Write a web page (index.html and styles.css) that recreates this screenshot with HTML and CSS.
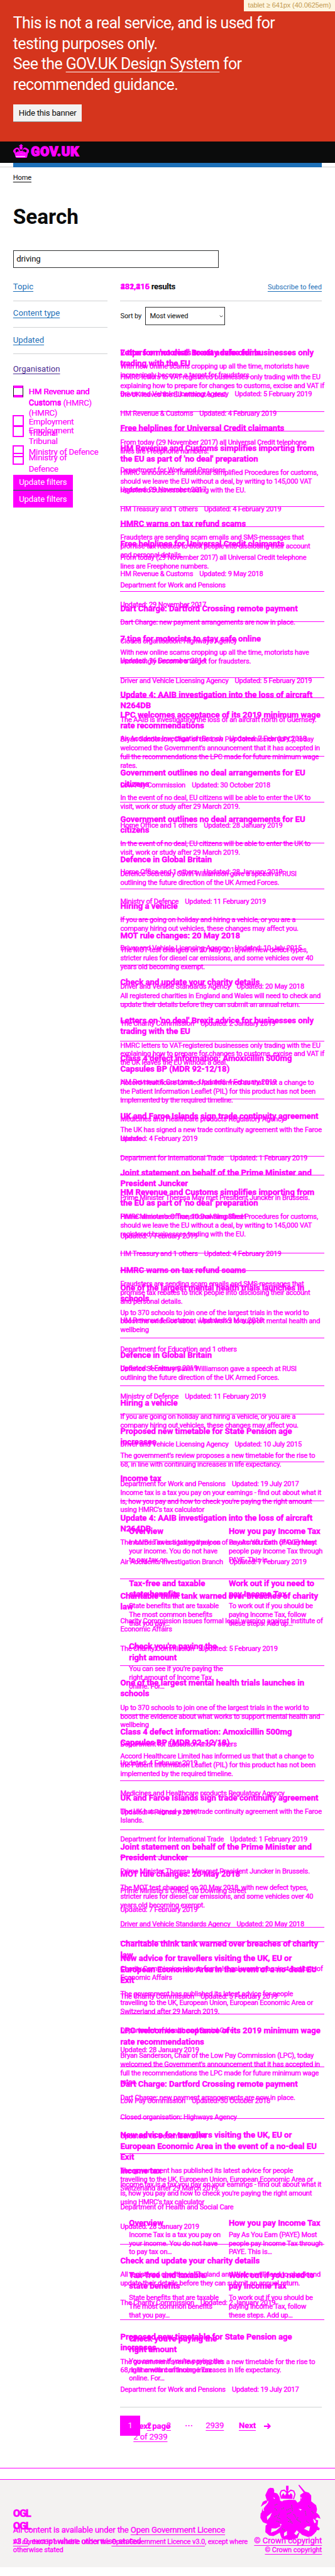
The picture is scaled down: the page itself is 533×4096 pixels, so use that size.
FILE: index.html
```html
<!DOCTYPE html>
<html lang="en">
<head>
<meta charset="utf-8">
<title>Search - GOV.UK</title>
<link rel="stylesheet" href="styles.css">
</head>
<body>
<div class="breakpoint">tablet ≥ 641px (40.0625em)</div>
<section class="banner">
  <p>This is not a real service, and is used for<br>testing purposes only.<br>See the <a>GOV.UK Design System</a> for<br>recommended guidance.</p>
  <button class="hide-btn">Hide this banner</button>
</section>
<header class="header">
  <svg class="crown" viewBox="0 0 108 94"><g fill="#f0f"><path d="M50 0h9v7h7v8h-7l6 8-4 14H47l-5-14 7-8h-8V7h9z"/><path d="M18 92 8 62 0 52v-9l8-11 14-8h12l8 9 5 12h15l5-12 8-9h12l14 8 10 12-2 10-8 10-6 28-10 2H28z"/></g><path d="M16 40l8-6 10 3 6 12-12 2-10 8zm48 7 8-12 14 2 8 8-6 12-12-5z" fill="#0b0c0c"/><path d="M17 82h66v5H17z" fill="#fff"/><path d="M24 62h3m10 6h3m12-3h4m10 2h3m10-4h3" stroke="#fff" stroke-width="3"/></svg>
  <span class="logotype">GOV.UK</span>
</header>
<div class="bluewrap"><div class="bluebar"></div></div>
<main class="main">
  <a class="home">Home</a>
  <h1>Search</h1>
  <div class="search">driving</div>
  <div class="columns">
    <aside>
      <div class="facet"><a>Topic</a></div>
      <div class="facet"><a>Content type</a></div>
      <div class="facet"><a>Updated</a></div>
      <div class="facet open"><a>Organisation</a></div>
      <div class="stack">
        <div class="checks first">
          <div class="check"><i class="box dark"></i><span>HM Revenue and<br>Customs (HMRC)</span></div>
          <div class="check"><i class="box"></i><span>Employment<br>Tribunal</span></div>
          <div class="check"><i class="box"></i><span>Ministry of Defence</span></div>
          <button class="update">Update filters</button>
        </div>
        <div class="checks second">
          <div class="check tall"><i class="box dark"></i><span>HM Revenue and<br>Customs<br>(HMRC)</span></div>
          <div class="check"><i class="box"></i><span>Employment<br>Tribunal</span></div>
          <div class="check"><i class="box"></i><span>Ministry of<br>Defence</span></div>
          <button class="update">Update filters</button>
        </div>
      </div>
    </aside>
    <section class="content">
      <div class="count">
        <h2><span class="stack num"><span>432,215</span><span>281,416</span></span><span>results</span></h2>
        <a>Subscribe to feed</a>
      </div>
      <div class="sort"><span>Sort by</span><div class="select">Most viewed<svg viewBox="0 0 10 6"><path d="M1 1l4 4 4-4" fill="none" stroke="#333" stroke-width="1.5"/></svg></div></div>
      <div class="stack lists">
        <ul class="results" id="list-a"></ul>
        <ul class="results" id="list-b"></ul>
      </div>
      <div class="stack pager">
        <div class="pages"><b class="cur">1</b><a>2</a><a>3</a><span class="dots">⋯</span><a class="last">2939</a><a class="next">Next</a><svg viewBox="0 0 16 14"><path d="M0 7h14M8 1l6 6-6 6" fill="none" stroke="#f0f" stroke-width="3"/></svg></div>
        <div class="nextpage"><b>Next page</b><a>2 of 2939</a></div>
      </div>
    </section>
  </div>
</main>
<div class="rule"></div>
<footer class="footer">
  <div class="stack">
    <div class="foot one">
      <div><b class="ogl">OGL</b><p>All content is available under the <a>Open Government Licence</a><br><a>v3.0</a>, except where otherwise stated</p></div>
      <div class="crown-copy">
        <svg class="crest" viewBox="50 45 415 390"><g fill="#f0f">
          <path d="M228 51h17v30h-3v40h-12V81h-2z"/>
          <path d="M105 73l14-8 22 3 6 16-2 14 22 6 16 24 4 26 14 6 10-8 40-4 42 2 14 18 18-12 2-16-2-26 24-16-34-46-1-9 7 4 38 44 26 8 16 20 0 40 34 26 6 28-8 40-20 22 8 30 32 34-30 42-20 18-24 5-40-14-18-16-14 38-56 14-52-12-10-24-4-16-24 14-20 10-28-4-28-24 2-44 12-12-30-12-18-30 2-30 30-30 10-20 4-36-12-40z"/>
          <path d="M54 196l14-34 20-10 16 4 2 20-14 24-6 20 10 26-20 0-16-12 4-22 18-24 10-16-16 8z"/>
          <path d="M412 244l28-5 16 16 9 24-24-10-12 14 20 6-4 36-16 4-10-14 16-14-8-14-14-10z"/>
          <path d="M388 338l16 8 34-8 22 4-4 16-18-2-4 14-28-4z"/></g>
          <path d="M196 140l-9-34 8-20 20-4 16 14 12 0 18-14 20 6 8 22-10 34" fill="none" stroke="#f0f" stroke-width="8"/>
          <path d="M198 140v-24l12-14 10 18 8-14 10-4 12 14 10-14 12 12v28z" fill="#f0f"/>
          <path d="M128 344l30 2 38-18-36 32-36 14zM214 376l20-14 0 28-20 10zM302 358l14 14-18 20-14-12zM372 330l22 2-8 32-34-16zM96 264l34-28-12 30-20 22zM186 314l12 2-8 12z" fill="#f3f2f1"/>
          <path d="M76 222q-16-6 8-34t18-32" fill="none" stroke="#f3f2f1" stroke-width="7"/>
          <path d="M138 132l14 4-4 6zM322 132l14 0-2 8zM314 210l22 4-8 8z" fill="#fff"/>
          <path d="M150 185l20-8m-20 30 16 14m2 50 24 10m-30 14 26 8m8-90 20-12m14 18 30-12m-26 40 34-14m-34 34 22 18m10-102 6 44m8 20 16 22m-42 16 20 30m30-30 26 18m30-78 6 34m14-70 16 14m-28 90 14 12m22-80 14 18m-270 24 14-10m40 90 20 14m20-64 20 6m36-20 16-16m-140-6 10-24" stroke="#6f7d75" stroke-width="5" stroke-dasharray="7 5" fill="none"/>
        </svg>
        <a>© Crown copyright</a>
      </div>
    </div>
    <div class="foot two">
      <div><b class="ogl">OGL</b><p>All content is available under the <a>Open Government Licence v3.0</a>, except where<br>otherwise stated</p></div>
      <div class="crown-copy"><a>© Crown copyright</a></div>
    </div>
  </div>
</footer>
<script src="results.js"></script>
</body>
</html>
```
FILE: results.js
```js
// title, description, meta rows; "|" marks a line break, "~" separates inline meta items
const items = {
  tips: ["7 tips for motorists to stay safe online", "With new online scams cropping up all the time, motorists have|increasingly become a target for fraudsters.", ["Driver and Vehicle Licensing Agency~Updated: 5 February 2019"]],
  letters: ["Letters on 'no deal' Brexit advice for businesses only|trading with the EU", "HMRC letters to VAT-registered businesses only trading with the EU|explaining how to prepare for changes to customs, excise and VAT if|the UK leaves the EU without a deal.", ["HM Revenue & Customs~Updated: 4 February 2019"]],
  free: ["Free helplines for Universal Credit claimants", "From today (29 November 2017) all Universal Credit telephone|lines are Freephone numbers.", ["Department for Work and Pensions", "Updated: 29 November 2017"]],
  simplifies: ["HM Revenue and Customs simplifies importing from|the EU as part of 'no deal' preparation", "HMRC announces Transitional Simplified Procedures for customs,|should we leave the EU without a deal, by writing to 145,000 VAT|registered businesses trading with the EU.", ["HM Treasury and 1 others~Updated: 4 February 2019"]],
  warns: ["HMRC warns on tax refund scams", "Fraudsters are sending scam emails and SMS-messages that|promise tax rebates to trick people into disclosing their account|and personal details.", ["HM Revenue & Customs~Updated: 9 May 2018"]],
  dart: ["Dart Charge: Dartford Crossing remote payment", "Dart Charge: new payment arrangements are now in place.", ["Closed organisation: Highways Agency", "Updated: 16 December 2014"]],
  aaib: ["Update 4: AAIB investigation into the loss of aircraft|N264DB", "The AAIB is investigating the loss of an aircraft north of Guernsey.", ["Air Accidents Investigation Branch~Updated: 7 February 2019"]],
  lpc: ["LPC welcomes acceptance of its 2019 minimum wage|rate recommendations", "Bryan Sanderson, Chair of the Low Pay Commission (LPC), today|welcomed the Government's announcement that it has accepted in|full the recommendations the LPC made for future minimum wage|rates.", ["Low Pay Commission~Updated: 30 October 2018"]],
  citizens: ["Government outlines no deal arrangements for EU|citizens", "In the event of no deal, EU citizens will be able to enter the UK to|visit, work or study after 29 March 2019.", ["Home Office and 1 others~Updated: 28 January 2019"]],
  defence: ["Defence in Global Britain", "Defence Secretary Gavin Williamson gave a speech at RUSI|outlining the future direction of the UK Armed Forces.", ["Ministry of Defence~Updated: 11 February 2019"]],
  hiring: ["Hiring a vehicle", "If you are going on holiday and hiring a vehicle, or you are a|company hiring out vehicles, these changes may affect you.", ["Driver and Vehicle Licensing Agency~Updated: 10 July 2015"]],
  mot: ["MOT rule changes: 20 May 2018", "The MOT test changed on 20 May 2018, with new defect types,|stricter rules for diesel car emissions, and some vehicles over 40|years old becoming exempt.", ["Driver and Vehicle Standards Agency~Updated: 20 May 2018"]],
  check: ["Check and update your charity details", "All registered charities in England and Wales will need to check and|update their details before they can submit an annual return.", ["The Charity Commission~Updated: 2 January 2019"]],
  amox: ["Class 4 defect information: Amoxicillin 500mg|Capsules BP (MDR 92-12/18)", "Accord Healthcare Limited has informed us that that a change to|the Patient Information Leaflet (PIL) for this product has not been|implemented by the required timeline.", ["Medicines and Healthcare products Regulatory Agency", "Updated: 4 February 2019"]],
  faroe: ["UK and Faroe Islands sign trade continuity agreement", "The UK has signed a new trade continuity agreement with the Faroe|Islands.", ["Department for International Trade~Updated: 1 February 2019"]],
  joint: ["Joint statement on behalf of the Prime Minister and|President Juncker", "Prime Minister Theresa May met President Juncker in Brussels.", ["Prime Minister's Office, 10 Downing Street", "Updated: 7 February 2019"]],
  mental: ["One of the largest mental health trials launches in|schools", "Up to 370 schools to join one of the largest trials in the world to|boost the evidence about what works to support mental health and|wellbeing", ["Department for Education and 1 others", "Updated: 4 February 2019"]],
  pension: ["Proposed new timetable for State Pension age|increases", "The government’s review proposes a new timetable for the rise to|68, in line with continuing increases in life expectancy.", ["Department for Work and Pensions~Updated: 19 July 2017"]],
  income: ["Income tax", "Income tax is a tax you pay on your earnings - find out about what it|is, how you pay and how to check you're paying the right amount|using HMRC's tax calculator", [], [
    ["Overview", "Income Tax is a tax you pay on|your income. You do not have|to pay tax on…"],
    ["How you pay Income Tax", "Pay As You Earn (PAYE) Most|people pay Income Tax through|PAYE. This is…"],
    ["Tax-free and taxable|state benefits", "State benefits that are taxable|The most common benefits|that you pay…"],
    ["Work out if you need to|pay Income Tax", "To work out if you should be|paying Income Tax, follow|these steps. Add up…"],
    ["Check you're paying the|right amount", "You can see if you’re paying the|right amount of Income Tax|online. For…"]]],
  think: ["Charitable think tank warned over breaches of charity|law", "Charity Commission issues formal legal warning against Institute of|Economic Affairs", ["The Charity Commission~Updated: 5 February 2019"]],
  travel: ["New advice for travellers visiting the UK, EU or|European Economic Area in the event of a no-deal EU|Exit", "The government has published its latest advice for people|travelling to the UK, European Union, European Economic Area or|Switzerland after 29 March 2019.", ["Department of Health and Social Care", "Updated: 28 January 2019"]]
};
const orders = {
  a: "tips free warns dart aaib citizens defence mot letters faroe simplifies mental hiring income amox joint think lpc travel check pension",
  b: "letters simplifies free tips lpc citizens hiring check amox joint warns defence pension aaib think mental faroe mot travel dart income"
};
const br = s => s.replace(/&/g, "&amp;").replace(/\|/g, "<br>");
const sub = list => list ? `<div class="parts">${list.map(p => `<div><h4>${br(p[0])}</h4><p>${br(p[1])}</p></div>`).join("")}</div>` : "";
const row = ([t, d, m, parts]) => `<li><h3>${br(t)}</h3><p>${br(d)}</p>${
  m.map(r => `<div class="meta">${r.split("~").map(x => `<span>${br(x)}</span>`).join("")}</div>`).join("")}${sub(parts)}</li>`;
for (const k in orders) document.getElementById("list-" + k).innerHTML = orders[k].split(" ").map(n => row(items[n])).join("");
```
FILE: styles.css
```css
html { font-size: 6.938px; background: #fff; }
* { box-sizing: border-box; }
body { margin: 0; font-family: Roboto, "Liberation Sans", sans-serif; font-size: 1.6rem; line-height: 2rem; letter-spacing: -.024rem; color: #0b0c0c; overflow-x: hidden; position: relative; white-space: nowrap; }
h1, h2, h3, h4, p, ul { margin: 0; padding: 0; font-size: inherit; list-style: none; }
h1, h2, h3, h4 { letter-spacing: -.004rem; }
button { font: inherit; letter-spacing: inherit; border: 0; padding: 0; display: block; }
a { text-decoration: underline; text-underline-offset: .25em; text-decoration-thickness: 1px; text-decoration-skip-ink: none; }
.stack { display: grid; }
.stack > * { grid-area: 1 / 1; }
.breakpoint { position: absolute; top: 0; right: 0; width: 20.9rem; height: 2.6rem; background: #fff6e0; color: #c39a50; font: 1.6rem/2.5rem "Liberation Sans", sans-serif; text-align: center; letter-spacing: -.02rem; }
.banner { height: 32.4rem; background: #d5351d; color: #fff; padding: 3rem; }
.banner p { font-size: 3.6rem; line-height: 4.72rem; letter-spacing: -.09rem; }
.banner a { text-underline-offset: .16em; }
.hide-btn { width: 15.8rem; height: 4.05rem; margin-top: 2rem; background: #f3f2f1; color: #0b0c0c; font-size: 1.9rem; line-height: 4.1rem; border-bottom: 1px solid #929191; letter-spacing: -.036rem; }
.header { height: 4.9rem; background: #0b0c0c; padding: .6rem 3rem 0; display: flex; gap: .5rem; }
.crown { width: 3.6rem; height: 3.2rem; }
.logotype { font-size: 3rem; font-weight: 900; line-height: 3.6rem; letter-spacing: .08rem; color: #f0f; -webkit-text-stroke: 1.4px #f0f; }
.bluewrap { height: 1.05rem; padding: 0 3rem; border-bottom: 1px solid #ccc; }
.bluebar { height: 1.05rem; background: #1d70b8; }
.main { padding: 1.5rem 3rem 0; height: 527.3rem; }
.home { display: block; width: max-content; }
h1 { margin-top: 5.5rem; font-size: 4.8rem; line-height: 5rem; }
.search { margin-top: 5rem; width: 47.2rem; height: 4.06rem; border: 1px solid #0b0c0c; outline: 1px solid #77777755; outline-offset: -1px; padding-left: .65rem; font-size: 1.9rem; line-height: 3.8rem; }
.columns { display: grid; grid-template-columns: 21.6rem 46.2rem; gap: 3rem; padding-top: 1.5rem; }
.facet { height: 6.1rem; padding-top: 1.55rem; border-bottom: 1px solid #d0d2d3; font-size: 1.9rem; line-height: 2.5rem; letter-spacing: 0; color: #1d70b8; }
.facet.open { border: 0; padding-top: 2.1rem; height: 7.2rem; color: #4c2c92; }
.checks { color: #f0f; font-size: 1.9rem; line-height: 2.5rem; -webkit-text-stroke: .2px #f0f; }
.check { display: grid; grid-template-columns: 2.4rem auto; gap: 1.2rem; height: 6.9rem; }
.check span { padding-top: .15rem; }
.box { height: 2.4rem; border: 1px solid #f0f; outline: .5px solid #f0f; }
.box.dark { border-color: #f0f #0b0c0c; outline: 0; border-top-width: 2px; border-bottom-width: 2px; }
.second { padding-top: .3rem; }
.second .check { height: 6.3rem; }
.second .tall { height: 8.95rem; }
.second .check span { padding-top: 0; margin-top: -.25rem; }
.update { width: 13.7rem; height: 3.65rem; background: #f0f; color: #fff; -webkit-text-stroke: 0; font-size: 1.9rem; border-bottom: 1px solid #00703c; margin-top: -.3rem; }
.second .update { margin-top: 2.2rem; border: 0; height: 3.85rem; }
.count { height: 6.1rem; border-bottom: 1px solid #d0d2d3; padding-top: 1.55rem; display: flex; justify-content: space-between; }
.count h2 { display: flex; gap: .4rem; font-size: 1.9rem; line-height: 2.5rem; letter-spacing: -.05rem; }
.count a { color: #1d70b8; line-height: 2.9rem; letter-spacing: 0; }
.num { color: #f0f; width: 6.7rem; }
.sort { display: flex; align-items: center; gap: .8rem; margin-top: 1.4rem; height: 4.05rem; }
.select { width: 18.4rem; height: 4.05rem; border: 1px solid #0b0c0c; outline: 1px solid #77777755; outline-offset: -1px; display: flex; align-items: center; justify-content: space-between; padding: 0 .3rem 0 1rem; }
.select svg { width: .9rem; }
.lists { margin-top: 2.5rem; color: #f0f; border-bottom: 1px solid #d0d2d3; -webkit-text-stroke: .4px #f0f; }
.results li { padding: 2.55rem 0 2.836rem; border-bottom: 1px solid #f0f; }
.results li:last-child { border: 0; }
.results h3, .results h4 { font-size: 1.9rem; line-height: 2.494rem; }
.results h3 + p { margin: 1rem 0 2.4rem; }
.meta { display: flex; gap: 1.45rem; }
.meta + .meta { margin-top: 2.4rem; }
.parts { display: grid; grid-template-columns: 22.85rem 21.3rem; row-gap: 3rem; padding-left: 2rem; margin: 2.5rem 0 2.54rem; }
.parts p { margin-top: .5rem; }
.pager { margin-top: 2rem; color: #f0f; font-size: 1.9rem; line-height: 4.6rem; -webkit-text-stroke: .2px #f0f; }
.pages { display: flex; }
.cur { width: 4.5rem; height: 4.6rem; background: #f0f; color: #fff; text-align: center; font-weight: 400; }
.pages a { margin-left: 1.6rem; }
.pages a + a { margin-left: 3.4rem; }
.pages .dots { width: 1.8rem; margin-left: 3.2rem; }
.pages .last { width: 4.7rem; margin-left: 3rem; }
.pages .next { width: 4.3rem; margin-left: 2.9rem; font-weight: 700; }
.pages svg { width: 1.6rem; height: 1.4rem; margin: 1.6rem 0 0 1.4rem; }
.nextpage { padding: 1.05rem 0 0 3rem; display: grid; line-height: 2.5rem; justify-content: start; }
.rule { border-top: 1px solid #f0f; height: 2.5rem; }
.footer { border-top: 1px solid #f0f; background: #f3f2f1; height: 20.2rem; padding: 0 3rem; color: #f0f; -webkit-text-stroke: .3px #f0f; }
.foot { display: flex; justify-content: space-between; align-items: flex-start; }
.ogl { display: block; font-size: 2.4rem; font-weight: 900; letter-spacing: -.2rem; line-height: 2rem; }
.one { font-size: 1.9rem; line-height: 2.5rem; }
.one .ogl { margin: 6.8rem 0 1.5rem; }
.two .ogl { margin: 9.75rem 0 1.5rem; }
.two { line-height: 1.96rem; }
.crown-copy { display: grid; justify-items: end; letter-spacing: -.01rem; }
.crest { width: 13.83rem; height: 13rem; margin: 1.2rem .3rem -1.45rem 0; }
.two .crown-copy { padding-top: 15.2rem; }
```
